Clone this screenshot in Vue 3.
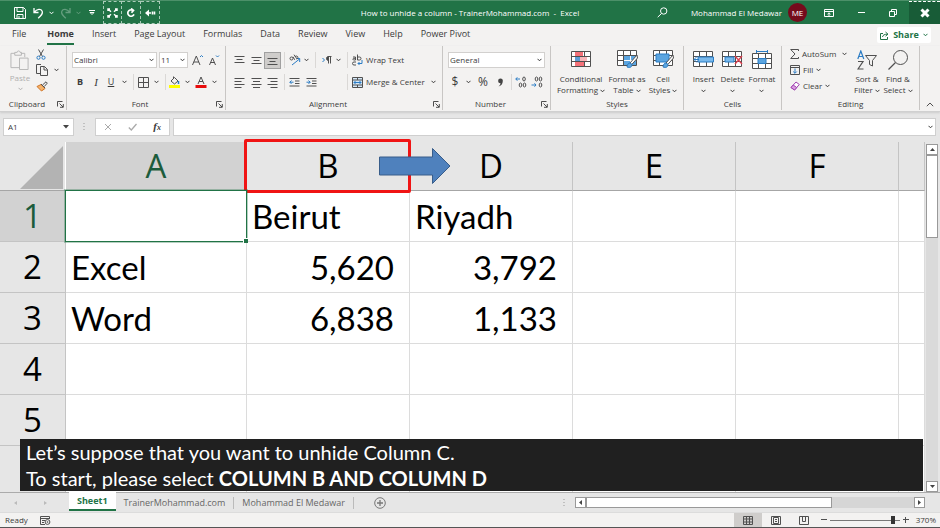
<script setup>
import { ref } from 'vue'

const tabs = ['File', 'Home', 'Insert', 'Page Layout', 'Formulas', 'Data', 'Review', 'View', 'Help', 'Power Pivot']
const activeTab = ref('Home')
const columns = ['A', 'B', 'D', 'E', 'F', '']
const rows = [
  { n: '1', cells: ['', 'Beirut', 'Riyadh', '', '', ''] },
  { n: '2', cells: ['Excel', '5,620', '3,792', '', '', ''] },
  { n: '3', cells: ['Word', '6,838', '1,133', '', '', ''] },
  { n: '4', cells: ['', '', '', '', '', ''] },
  { n: '5', cells: ['', '', '', '', '', ''] },
  { n: '', cells: ['', '', '', '', '', ''] }
]
const isNumber = (v) => /^[\d,]+$/.test(v)
const zoom = ref(370)
const cellName = ref('A1')
const formula = ref('')
</script>

<template>
  <div class="app">
    <svg class="defs" aria-hidden="true">
      <symbol id="chev" viewBox="0 0 5 4"><path d="M.5 .8l2 2 2-2" fill="none" stroke="currentColor" /></symbol>
      <symbol id="launch" viewBox="0 0 7 7"><path d="M.5 5.5v-5h5M2.5 2.5l3.5 3.5M6.3 3v3.3H3" fill="none" stroke="currentColor" stroke-width=".9" /></symbol>
      <symbol id="table" viewBox="0 0 21 17"><path d="M.5 .5h19v15H.5zM.5 5.5h19M.5 10.5h19M6.5 .5v15M13.5 .5v15" fill="#fff" stroke="#505050" /></symbol>
    </svg>

    <header class="titlebar">
      <div class="qat">
        <button aria-label="Save"><svg width="12" height="12" viewBox="0 0 12 12"><path d="M.5 .5h9l2 2v9H.5zM3 .5v4h6v-4M3 11.5v-4h6v4M5 9v2" /></svg></button>
        <button aria-label="Undo"><svg width="11" height="12" viewBox="0 0 11 12"><path d="M1 1v4.5h4.5M1.3 5.2C4 1.5 8 1.6 9.2 4.2c1 2.5-1 4.3-4 7" stroke-width="1.3" /></svg></button>
        <button aria-label="Undo list"><svg class="chev"><use href="#chev" /></svg></button>
        <button class="dim" aria-label="Redo"><svg width="11" height="12" viewBox="0 0 11 12"><path d="M10 1v4.5H5.5M9.700 5.200C7 1.500 3 1.600 1.800 4.200c-1 2.500 1 4.300 4 7" stroke-width="1.300" /></svg></button>
        <button class="dim" aria-label="Redo list"><svg class="chev"><use href="#chev" /></svg></button>
        <button aria-label="Customize toolbar"><svg width="6" height="7" viewBox="0 0 6 7"><path d="M0 1.500h6M1 3.500l2 2 2-2z" /></svg></button>
        <button class="boxed" aria-label="Fit"><svg width="11" height="10" viewBox="0 0 11 10"><path d="M1 3V1h2M8 1h2v2M10 7v2H8M3 9H1V7M1.500 1.500l2.500 2.200M9.500 1.500L7 3.700M1.500 8.500L4 6.300M9.500 8.500L7 6.300" stroke-width="1.500" /></svg></button>
        <button class="boxed" aria-label="Refresh"><svg width="10" height="10" viewBox="0 0 10 10"><path d="M8 6.300A3.200 3.200 0 1 1 6.500 2.200M5 .5l2.500 1.900L5.500 4.800" stroke-width="1.700" /></svg></button>
        <button class="boxed" aria-label="Back"><svg width="11" height="8" viewBox="0 0 11 8"><path d="M0 4l4-3.500v7z" class="solid" /><path d="M3 4h3M7.500 2.500v3M9.500 2.500v3" stroke-width="1.600" /></svg></button>
      </div>
      <div class="title">How to unhide a column - TrainerMohammad.com&nbsp; -&nbsp; Excel</div>
      <div class="account">
        <button class="search" aria-label="Search"><svg width="11" height="11" viewBox="0 0 11 11"><circle cx="6.700" cy="4" r="3.200" /><path d="M4.500 6.500L.7 10.200" /></svg></button>
        <span>Mohammad El Medawar</span>
        <span class="avatar">ME</span>
        <button class="win" aria-label="Ribbon options"><svg width="10" height="8" viewBox="0 0 10 8"><path d="M.5 .5h9v7h-9zM.5 2.500h9M5 7V4M3.500 5.200L5 3.800l1.500 1.400" /></svg></button>
        <button class="win" aria-label="Minimize"><svg width="7" height="8" viewBox="0 0 7 8"><path d="M0 3.500h7" /></svg></button>
        <button class="win" aria-label="Restore"><svg width="8" height="8" viewBox="0 0 8 8"><path d="M.5 2.500h5v5h-5zM2.500 2V.5h5v5H6" /></svg></button>
        <button class="close" aria-label="Close"><svg width="10" height="10" viewBox="0 0 10 10"><path d="M1.500 1.500l7 7M8.500 1.500l-7 7" stroke-width="3" /></svg></button>
      </div>
    </header>

    <nav class="tabs">
      <button v-for="t in tabs" :key="t" :class="{ active: t === activeTab }" @click="activeTab = t">{{ t }}</button>
      <button class="share"><svg width="9" height="9" viewBox="0 0 9 9"><path d="M3 2.500H.5v6h7V6M2.500 6c.3-2 2-2.800 5-2.800M5.500 1l2.500 2.200-2.500 2" /></svg><b>Share</b><svg class="chev"><use href="#chev" /></svg></button>
    </nav>

    <section class="ribbon">
      <div class="group clipboard">
        <div class="body">
          <button class="big paste"><svg width="20" height="21" viewBox="0 0 20 21"><path d="M4.500 3.500H.5v15h9M11 3.500h4v4M4.500 5.500v-3h2.500a1.500 1.500 0 0 1 3 0h1.500v3zM9.500 8.500h9v12h-9z" /></svg><span>Paste</span><svg class="chev"><use href="#chev" /></svg></button>
          <div class="stack">
            <button aria-label="Cut"><svg width="10" height="11" viewBox="0 0 10 11"><path d="M2.500 .5l4 7M7.500 .5l-4 7" stroke="#505050" /><circle cx="2.500" cy="8.700" r="1.600" stroke="#2b7cc4" /><circle cx="7.500" cy="8.700" r="1.600" stroke="#2b7cc4" /></svg></button>
            <button class="pair" aria-label="Copy"><svg width="12" height="12" viewBox="0 0 12 12"><path d="M4 9.500H.5v-9H5M4.500 2.500h4l3 3v6h-7zM8 2.500v3.500h3.500" /></svg><svg class="chev"><use href="#chev" /></svg></button>
            <button aria-label="Format painter"><svg width="12" height="11" viewBox="0 0 12 11"><path d="M1 5.500l4-2 4 4L5.500 10z" fill="#f5b36b" stroke="#d07526" /><path d="M5 3l4 4M6.500 4L10 .8l1.300 1.300L8.300 5.500" stroke="#505050" /></svg></button>
          </div>
        </div>
        <footer>Clipboard<svg class="launch"><use href="#launch" /></svg></footer>
      </div>

      <div class="group font">
        <div class="body lines">
          <div class="line">
            <span class="combo name"><select aria-label="Font"><option>Calibri</option></select><svg class="chev"><use href="#chev" /></svg></span>
            <span class="combo size"><select aria-label="Font size"><option>11</option></select><svg class="chev"><use href="#chev" /></svg></span>
            <button class="grow" aria-label="Grow font"><svg width="12" height="12" viewBox="0 0 12 12"><path d="M.5 11L4.300 2 8 11M1.800 8h5" /><path d="M8 3l1.500-1.500L11 3" stroke="#2b7cc4" /></svg></button>
            <button class="grow" aria-label="Shrink font"><svg width="11" height="12" viewBox="0 0 11 12"><path d="M.5 11l3-7 3 7M1.600 8.500h3.800" /><path d="M7 1.500L8.500 3 10 1.500" stroke="#2b7cc4" /></svg></button>
          </div>
          <div class="line font-row">
            <button class="glyph"><b>B</b></button><button class="serif"><i>I</i></button><button class="glyph"><u>U</u></button>
            <svg class="chev"><use href="#chev" /></svg><i class="sep" />
            <button aria-label="Borders"><svg width="11" height="11" viewBox="0 0 11 11"><path d="M.5 .5h10v10H.5zM5.500 .5v10M.5 5.500h10" /></svg></button>
            <svg class="chev"><use href="#chev" /></svg><i class="sep" />
            <button aria-label="Fill colour"><svg width="12" height="12" viewBox="0 0 12 12"><path d="M0 10.500h11" stroke="#ff0" stroke-width="3" /><path d="M2 5l3.500-3.500L9 5 5.500 8zM4.500 3V.5" /><path d="M9.500 5v3" stroke="#2b7cc4" stroke-width="1.500" /></svg></button>
            <svg class="chev"><use href="#chev" /></svg>
            <button aria-label="Font colour"><svg width="12" height="12" viewBox="0 0 12 12"><path d="M.5 10.500h11" stroke="#e80d0d" stroke-width="3" /><path d="M3 8l3-7 3 7M4 5.500h4" /></svg></button>
            <svg class="chev"><use href="#chev" /></svg>
          </div>
        </div>
        <footer>Font<svg class="launch"><use href="#launch" /></svg></footer>
      </div>

      <div class="group align">
        <div class="body lines">
          <div class="line align-row">
            <button aria-label="Top align"><svg width="11" height="11" viewBox="0 0 11 11"><path d="M.5 1.500h10M2.500 4.500h6M.5 7.500h10" /></svg></button>
            <button aria-label="Middle align"><svg width="11" height="11" viewBox="0 0 11 11"><path d="M.5 2.500h10M2.500 5.500h6M.5 8.500h10" /></svg></button>
            <button class="pressed" aria-label="Bottom align"><svg width="11" height="11" viewBox="0 0 11 11"><path d="M.5 3.500h10M2.500 6.500h6M.5 9.500h10" /></svg></button>
            <i class="sep" />
            <button aria-label="Orientation"><svg width="12" height="12" viewBox="0 0 12 12"><path d="M3 11l7.500-6M7.500 4.500h3.200V8" stroke="#2b7cc4" /><circle cx="2.500" cy="4.500" r="1.500" /><path d="M4 2.800l1.700 3M5 .7l2.800 4M6 3a1.500 1.500 0 1 1 1.500 2" /></svg></button>
            <svg class="chev"><use href="#chev" /></svg><i class="sep" />
            <button aria-label="Text direction"><svg width="10" height="8" viewBox="0 0 10 8"><path d="M.5 2l2 2-2 2" stroke="#2b7cc4" /><path d="M6.500 7.500v-7M8.500 7.500v-7M9.500 .5H6" /><path d="M6.500 .5a2 2 0 0 0 0 4z" fill="#444" /></svg></button>
            <svg class="chev"><use href="#chev" /></svg><i class="sep" />
            <button class="wide"><svg width="11" height="12" viewBox="0 0 11 12"><path d="M1 3h2.500v3H1.500a1 1 0 0 1 0-1.700h2M5.500 .5v5.500h2a1.500 1.500 0 0 0 0-3h-2M4 8H2a1.500 1.500 0 0 0 0 3h2" /><path d="M10 6v3.500H6M7.500 8L6 9.500 7.500 11" stroke="#2b7cc4" /></svg>Wrap Text</button>
          </div>
          <div class="line align-row second">
            <button aria-label="Align left"><svg width="11" height="11" viewBox="0 0 11 11"><path d="M.5 1.500h10M.5 4.500h7M.5 7.500h10M.5 10.500h7" /></svg></button>
            <button aria-label="Center"><svg width="11" height="11" viewBox="0 0 11 11"><path d="M.5 1.500h10M2 4.500h7M.5 7.500h10M2 10.500h7" /></svg></button>
            <button aria-label="Align right"><svg width="11" height="11" viewBox="0 0 11 11"><path d="M.5 1.500h10M3.500 4.500h7M.5 7.500h10M3.500 10.500h7" /></svg></button>
            <i class="sep" />
            <button aria-label="Decrease indent"><svg width="11" height="10" viewBox="0 0 11 10"><path d="M.5 1.500h10M6 4h4.500M6 6.500h4.500M.5 9h10" /><path d="M4.500 5.200H.8M2.500 3.500L.8 5.200l1.700 1.700" stroke="#2b7cc4" /></svg></button>
            <button aria-label="Increase indent"><svg width="11" height="10" viewBox="0 0 11 10"><path d="M.5 1.500h10M6 4h4.500M6 6.500h4.500M.5 9h10" /><path d="M.5 5.200h3.700M2.500 3.500l1.700 1.700-1.700 1.700" stroke="#2b7cc4" /></svg></button>
            <i />
            <i class="sep" />
            <button class="wide"><svg width="11" height="11" viewBox="0 0 11 11"><path d="M.5 .5h10v10H.5z" fill="#d5e8f8" /><path d="M.5 3h10M.5 8h10M5.500 .5V3M5.500 8v2.500" /><path d="M2 5.500h7M3.500 4L2 5.500 3.500 7M7.500 4L9 5.500 7.500 7" stroke="#2b7cc4" /></svg>Merge &amp; Center<svg class="chev far"><use href="#chev" /></svg></button>
          </div>
        </div>
        <footer>Alignment<svg class="launch"><use href="#launch" /></svg></footer>
      </div>

      <div class="group number">
        <div class="body lines">
          <div class="line"><span class="combo full"><select aria-label="Number format"><option>General</option></select><svg class="chev"><use href="#chev" /></svg></span></div>
          <div class="line number-row">
            <button class="sym">$</button><svg class="chev"><use href="#chev" /></svg><button class="sym">%</button>
            <button aria-label="Comma style"><svg width="7" height="9" viewBox="0 0 7 9"><path d="M3.500 .5a2.300 2.300 0 0 1 2.300 2.500C5.800 6 4 8 1.500 8.500c1.200-1 2-2 2-3.200A2.400 2.400 0 0 1 3.500 .5z" class="ink" /></svg></button>
            <i class="sep" />
            <button aria-label="Increase decimal"><svg width="12" height="12" viewBox="0 0 12 12"><path d="M5 3H.8M2.300 1.300L.8 3l1.500 1.700" stroke="#2b7cc4" /><ellipse cx="9" cy="3" rx="1.300" ry="2" /><ellipse cx="5.500" cy="9" rx="1.300" ry="2" /><ellipse cx="9.500" cy="9" rx="1.300" ry="2" /></svg></button>
            <button aria-label="Decrease decimal"><svg width="12" height="12" viewBox="0 0 12 12"><path d="M.5 9h4.500M3.500 7.300L5 9l-1.500 1.700" stroke="#2b7cc4" /><ellipse cx="5.500" cy="3" rx="1.300" ry="2" /><ellipse cx="9.500" cy="3" rx="1.300" ry="2" /><ellipse cx="9.500" cy="9" rx="1.300" ry="2" /></svg></button>
          </div>
        </div>
        <footer>Number<svg class="launch"><use href="#launch" /></svg></footer>
      </div>

      <div class="group styles">
        <div class="body">
          <button class="big"><svg width="20" height="18" viewBox="0 0 20 18"><use href="#table" width="21" height="17" /><path d="M4 1h8v4H4zM4 11h9v4H4z" fill="#f4727a" stroke="none" /><path d="M4 6h5v4H4z" fill="#5b9bd5" stroke="none" /><path d="M9 6h7v4H9z" fill="#f9b5b9" stroke="none" /></svg><span>Conditional<br>Formatting <svg class="chev"><use href="#chev" /></svg></span></button>
          <button class="big"><svg width="21" height="20" viewBox="0 0 21 20"><use href="#table" width="21" height="17" /><path d="M7 6h12v9H7z" fill="#5ba5e0" stroke="none" /><path d="M7 10.500h12M13.500 6v9" stroke="#fff" /><path d="M20 5l-7 8 1.800 1.500L20.500 8z" fill="#fff" /><path d="M13 13c-2 0-2.500 1.500-3 4 2.500 1 5 .5 5-2.500z" fill="#5ba5e0" stroke="#2b7cc4" /></svg><span>Format as<br>Table <svg class="chev"><use href="#chev" /></svg></span></button>
          <button class="big"><svg width="21" height="20" viewBox="0 0 21 20"><use href="#table" width="21" height="17" /><path d="M3 4h13v8H3z" fill="#5ba5e0" stroke="#2b7cc4" /><path d="M20 5l-7 8 1.800 1.500L20.500 8z" fill="#fff" /><path d="M13 13c-2 0-2.500 1.500-3 4 2.500 1 5 .5 5-2.500z" fill="#5ba5e0" stroke="#2b7cc4" /></svg><span>Cell<br>Styles <svg class="chev"><use href="#chev" /></svg></span></button>
        </div>
        <footer>Styles</footer>
      </div>

      <div class="group cells">
        <div class="body">
          <button class="big"><svg width="21" height="18" viewBox="0 0 21 18"><use href="#table" width="21" height="17" /><path d="M5 6h15.500v5H5z" fill="#79b9ec" stroke="#2b7cc4" /><path d="M6 8.500H1M4 5.500L1 8.500l3 3" stroke="#2b7cc4" /></svg><span>Insert<br><svg class="chev"><use href="#chev" /></svg></span></button>
          <button class="big"><svg width="21" height="18" viewBox="0 0 21 18"><use href="#table" width="21" height="17" /><path d="M3 6h9v5H3z" fill="#79b9ec" stroke="#2b7cc4" /><path d="M13 5l7 8M20 5l-7 8" stroke="#e04050" stroke-width="1.300" /></svg><span>Delete<br><svg class="chev"><use href="#chev" /></svg></span></button>
          <button class="big"><svg width="20" height="20" viewBox="0 0 20 20"><path d="M4.500 1.500h11M4.500 0v3M15.500 0v3" stroke="#2b7cc4" /><use href="#table" y="3" width="21" height="17" /><path d="M6 8.500h8v5H6z" fill="#5ba5e0" stroke="#2b7cc4" /></svg><span>Format<br><svg class="chev"><use href="#chev" /></svg></span></button>
        </div>
        <footer>Cells</footer>
      </div>

      <div class="group editing">
        <div class="body">
          <div class="stack">
            <button class="wide"><svg width="9" height="10" viewBox="0 0 9 10"><path d="M8.500 2V.5H.7L5 5 .7 9.500h7.800V8" /></svg>AutoSum<svg class="chev far"><use href="#chev" /></svg></button>
            <button class="wide"><svg width="10" height="10" viewBox="0 0 10 10"><path d="M.5 .5h9v9h-9zM.5 2.500h9" /><path d="M5 3.500v4.700M3.200 6.500L5 8.300l1.800-1.800" stroke="#2b7cc4" /></svg>Fill<svg class="chev"><use href="#chev" /></svg></button>
            <button class="wide"><svg width="10" height="10" viewBox="0 0 10 10"><path d="M6 1l3.300 2.500L4.500 9 1 6.500z" fill="#fff" stroke="#a03fb0" /><path d="M3.200 4L6.800 6.600 4.500 9 1 6.500z" fill="#d9a0e0" stroke="#a03fb0" /></svg>Clear<svg class="chev"><use href="#chev" /></svg></button>
          </div>
          <button class="big"><svg width="20" height="20" viewBox="0 0 20 20"><path d="M.8 9L3.800 1l3 8M1.800 6.500h4" stroke="#2b7cc4" stroke-width="1.200" /><path d="M1 11.500h5L1 19h5.500" stroke-width="1.200" /><path d="M8.500 5.500h11l-4 5v5.500l-3-1.500v-4z" /></svg><span>Sort &amp;<br>Filter <svg class="chev"><use href="#chev" /></svg></span></button>
          <button class="big"><svg width="21" height="20" viewBox="0 0 21 20"><circle cx="12.500" cy="7.500" r="7" /><path d="M7.500 12.500l-7 7" stroke-width="1.300" /></svg><span>Find &amp;<br>Select <svg class="chev"><use href="#chev" /></svg></span></button>
        </div>
        <footer>Editing</footer>
      </div>
      <button class="collapse" aria-label="Collapse ribbon"><svg width="8" height="5" viewBox="0 0 8 5"><path d="M.8 4.200L4 1l3.200 3.200" /></svg></button>
    </section>

    <section class="formula-bar">
      <label class="namebox"><input v-model="cellName" aria-label="Name box"><svg width="6" height="4" viewBox="0 0 6 4"><path d="M0 0h6L3 3.500z" class="ink" /></svg></label>
      <svg class="dots" width="2" height="10" viewBox="0 0 2 10"><path d="M1 1v9" stroke="#999" stroke-dasharray="1 2" /></svg>
      <div class="fx">
        <button aria-label="Cancel"><svg width="8" height="8" viewBox="0 0 8 8"><path d="M1 1l6 6M7 1L1 7" stroke="#aaa" /></svg></button>
        <button aria-label="Enter"><svg width="9" height="8" viewBox="0 0 9 8"><path d="M.8 4.500l2.500 2.500L8.500 1" stroke="#aaa" stroke-width="1.300" /></svg></button>
        <button aria-label="Insert function" class="serif"><i><b>f<small>x</small></b></i></button>
      </div>
      <label class="formula"><input v-model="formula" aria-label="Formula"><svg class="chev"><use href="#chev" /></svg></label>
    </section>

    <main class="workspace">
      <div class="sheet">
        <table>
          <colgroup><col class="c-head"><col class="c-a"><col v-for="i in 4" :key="i" class="c-n"><col></colgroup>
          <thead>
            <tr>
              <td class="corner"><svg width="43" height="43" viewBox="0 0 43 43"><path d="M43 0v43H0z" /></svg></td>
              <th v-for="c in columns" :key="c" :class="{ on: c === 'A', target: c === 'B' }">
                {{ c }}
                <template v-if="c === 'B'">
                  <span class="frame" />
                  <svg class="arrow" width="74" height="38" viewBox="0 0 74 38"><path d="M1.500 10h53V1.500L72 19 54.500 36.500V28h-53z" /></svg>
                </template>
              </th>
            </tr>
          </thead>
          <tbody>
            <tr v-for="(r, ri) in rows" :key="ri">
              <th :class="{ on: ri === 0 }">{{ r.n }}</th>
              <td v-for="(v, ci) in r.cells" :key="ci" :class="{ num: isNumber(v), selected: ri === 0 && ci === 0 }">{{ v }}</td>
            </tr>
          </tbody>
        </table>
      </div>
      <div class="vscroll">
        <button aria-label="Scroll up"><svg width="5" height="3" viewBox="0 0 5 3"><path d="M0 3L2.500 0 5 3z" class="ink" /></svg></button>
        <div class="thumb" />
        <div class="track" />
        <button aria-label="Scroll down"><svg width="5" height="3" viewBox="0 0 5 3"><path d="M0 0l2.500 3L5 0z" class="ink" /></svg></button>
      </div>
      <p class="caption">Let’s suppose that you want to unhide Column C.<br>To start, please select <b>COLUMN B AND COLUMN D</b></p>
    </main>

    <section class="sheetbar">
      <div class="nav">
        <button aria-label="Previous sheet"><svg width="3" height="4" viewBox="0 0 3 4"><path d="M3 0v4L0 2z" fill="#bbb" stroke="none" /></svg></button>
        <button aria-label="Next sheet"><svg width="3" height="4" viewBox="0 0 3 4"><path d="M0 0v4l3-2z" fill="#bbb" stroke="none" /></svg></button>
      </div>
      <button class="sheettab current">Sheet1</button>
      <button class="sheettab">TrainerMohammad.com</button>
      <button class="sheettab">Mohammad El Medawar</button>
      <button class="add" aria-label="New sheet"><svg width="12" height="12" viewBox="0 0 12 12"><circle cx="6" cy="6" r="5.300" stroke="#777" /><path d="M6 3v6M3 6h6" stroke="#777" stroke-width="1.300" /></svg></button>
      <svg class="dots" width="2" height="10" viewBox="0 0 2 10"><path d="M1 1v9" stroke="#999" stroke-dasharray="1 2" /></svg>
      <div class="hscroll">
        <button aria-label="Scroll left"><svg width="3" height="5" viewBox="0 0 3 5"><path d="M3 0v5L0 2.500z" class="ink" /></svg></button>
        <div class="thumb" />
        <div class="track" />
        <button aria-label="Scroll right"><svg width="3" height="5" viewBox="0 0 3 5"><path d="M0 0v5l3-2.500z" class="ink" /></svg></button>
      </div>
    </section>

    <footer class="status">
      <span>Ready</span>
      <button class="macro" aria-label="Record macro"><svg width="11" height="9" viewBox="0 0 11 9"><path d="M5 8.500H.5v-8h9V3M.5 2.500h9M2 4.500h3M2 6.500h2" /><circle cx="7.500" cy="6" r="2.400" /><circle cx="7.500" cy="6" r=".8" class="ink" /></svg></button>
      <button class="view on" aria-label="Normal"><svg width="10" height="9" viewBox="0 0 10 9"><path d="M.5 .5h9v8h-9zM.5 3h9M.5 6h9M3.500 .5v8M6.500 .5v8" /></svg></button>
      <button class="view" aria-label="Page layout"><svg width="10" height="9" viewBox="0 0 10 9"><path d="M.5 .5h9v8h-9zM2.500 1.500h5v6h-5zM4 3.500h2M4 5.500h2" /></svg></button>
      <button class="view" aria-label="Page break"><svg width="10" height="9" viewBox="0 0 10 9"><path d="M.5 .5h9v8h-9zM3.500 .5v5h3v-5" /></svg></button>
      <button class="step" aria-label="Zoom out"><svg width="6" height="6" viewBox="0 0 6 6"><path d="M0 2.500h6" /></svg></button>
      <input v-model="zoom" type="range" min="10" max="400" aria-label="Zoom">
      <button class="step" aria-label="Zoom in"><svg width="6" height="6" viewBox="0 0 6 6"><path d="M0 2.500h6M2.500 0v6" /></svg></button>
      <span class="pct">{{ zoom }}%</span>
    </footer>
  </div>
</template>

<style>
body { margin: 0; }
</style>

<style scoped>
.app { height: 100vh; min-height: 420px; display: flex; flex-direction: column; box-sizing: border-box; border-bottom: 1px solid #555; background: #e6e6e6; color: #3b3b3b; font: 8px/12px "Open Sans", "Noto Sans", sans-serif; overflow: hidden; }
.app * { box-sizing: border-box; }
.defs { position: absolute; width: 0; height: 0; }
button, select, input { font: inherit; color: inherit; background: none; border: 0; padding: 0; margin: 0; white-space: nowrap; }
button { display: flex; align-items: center; justify-content: center; }
svg { flex: none; fill: none; stroke: #505050; }
svg .ink { fill: #444; stroke: none; }
.chev { width: 5px; height: 4px; stroke: none; }
.launch { width: 7px; height: 7px; stroke: none; }

.titlebar { display: grid; grid-template-columns: 1fr auto 1fr; flex: none; height: 24px; background: #217346; border-top: 1px solid #4c9069; color: #fff; align-items: stretch; }
.titlebar svg { stroke: #fff; }
.titlebar .chev { stroke: none; }
.titlebar .solid { fill: #fff; stroke: none; }
.title { align-self: center; white-space: nowrap; }
.qat { display: grid; grid-template-columns: 18px 18px 8px 20px 6px 22px 19px 19px 19px; padding-left: 11px; }
.qat .dim { opacity: .3; }
.boxed { border: 1px dashed #a9cbb8; border-left-width: 0; }
.boxed:nth-child(7) { border-left-width: 1px; }
.account { display: flex; align-items: center; justify-content: flex-end; }
.account button { height: 100%; }
.search { width: 12px; margin-right: 22px; }
.avatar { width: 19px; height: 19px; margin: 0 6px; border-radius: 50%; background: #750b1c; text-align: center; line-height: 19px; }
.win { width: 32px; }
.close { width: 31px; background: #185c37; border-top: 1px dashed #fff; }

.tabs { display: flex; flex: none; align-items: center; gap: 18px; height: 22px; padding: 0 9px 0 12px; background: #f3f2f1; font-size: 9px; }
.tabs button { height: 19px; border-bottom: 2px solid transparent; }
.tabs .active { font-weight: 700; border-color: #217346; margin-left: 3px; }
.tabs .share { margin-left: auto; width: 54px; height: 16px; gap: 4px; background: #fff; color: #217346; border: 0; border-radius: 2px; }
.share svg { stroke: #217346; }
.share .chev { stroke: none; }

.ribbon { display: flex; flex: none; height: 66px; padding-bottom: 1px; background: #f3f2f1; border-bottom: 1px solid #d0d0d0; box-shadow: 0 1px 2px #ccc; }
.group { display: flex; flex-direction: column; border-right: 1px solid #c8c6c4; flex: none; }
.body { flex: 1; display: flex; min-height: 0; }
.group footer { position: relative; height: 12px; text-align: center; white-space: nowrap; }
.group .launch { position: absolute; right: 2px; top: 3px; }
.clipboard { width: 67px; }
.clipboard footer { padding-right: 12px; }
.font { width: 159px; }
.font footer { padding-right: 12px; }
.align { width: 217px; }
.align footer { padding-right: 12px; }
.number { width: 108px; }
.number footer { padding-right: 12px; }
.styles { width: 133px; }
.cells { width: 98px; }
.editing { width: 138px; }

.big { flex-direction: column; justify-content: flex-start; gap: 3px; padding-top: 4px; line-height: 11px; text-align: center; }
.big > svg:first-child { height: 20px; }
.big span { display: block; }
.big span .chev { vertical-align: middle; }
.paste { width: 34px; padding-left: 6px; color: #b0b0b0; gap: 2px; }
.paste > svg { stroke: #b5b5b5; }
.paste > .chev { stroke: none; margin-top: 2px; }
.clipboard .stack { display: grid; grid-template-rows: 16px 16px 16px; justify-items: start; padding-left: 2px; }
.pair { gap: 6px; }
.styles .body { display: grid; grid-template-columns: 52px 40px 32px; padding-left: 4px; }
.cells .body { display: grid; grid-template-columns: 29px 29px 30px; padding-left: 5px; }
.editing .body { display: grid; grid-template-columns: 62px 30px 32px; padding-left: 8px; }
.editing .stack { display: grid; grid-template-rows: 16px 16px 16px; justify-items: start; }
.wide { gap: 3px; }
.wide .far { margin-left: 3px; }

.lines { flex-direction: column; }
.line { display: flex; align-items: center; gap: 2px; height: 18px; margin: 5px 0 0 5px; }
.line + .line { height: 16px; margin-top: 5px; }
.line > .chev { justify-self: center; }
.font-row { display: grid; grid-template-columns: 16px 16px 14px 12px 6px 14px 12px 6px 14px 10px 18px 8px; gap: 0; }
.align-row { display: grid; grid-template-columns: 17px 16px 17px 6px 15px 9px 9px 14px 9px 9px auto; gap: 0; justify-content: start; }
.align-row.second { grid-template-columns: 17px 16px 17px 6px 15px 18px 23px 9px auto; }
.number-row { display: grid; grid-template-columns: 14px 12px 18px 16px 6px 14px 18px; gap: 0; }
.sep { width: 1px; height: 16px; background: #dad8d6; justify-self: center; }
.combo { display: grid; align-items: center; height: 16px; background: #fff; border: 1px solid #d2d0ce; }
.combo > * { grid-area: 1 / 1; }
.combo select { appearance: none; width: 100%; padding-left: 1px; line-height: 14px; outline: 0; }
.combo .chev { justify-self: end; margin-right: 2px; pointer-events: none; }
.name { width: 85px; }
.size { width: 29px; }
.full { width: 97px; }
.grow { width: 15px; }
.glyph { font-size: 9px; }
.serif { font-family: "Liberation Serif", serif; font-size: 11px; }
.serif small { font-size: 8px; }
.sym { font-size: 12px; }
.pressed { width: 17px; height: 17px; background: #cfcdcb; border: 1px solid #a0a0a0; }
.collapse { margin-left: auto; padding: 0 6px 3px 0; align-self: flex-end; }

.formula-bar { display: flex; flex: none; align-items: center; height: 30px; padding: 0 4px 0 3px; }
.namebox, .formula, .fx { display: flex; align-items: center; height: 18px; background: #fff; border: 1px solid #cfcfcf; }
.namebox { width: 71px; padding: 0 4px; }
.namebox input { flex: 1; min-width: 0; }
.dots { margin: 0 10px 0 9px; }
.fx { width: 75px; justify-content: space-around; }
.formula { flex: 1; margin-left: 3px; padding: 0 2px; }
.formula input { flex: 1; outline: 0; }

.workspace { position: relative; flex: 1; display: flex; min-height: 0; margin-top: -6px; }
.sheet { flex: 1; min-width: 0; overflow: hidden; padding-top: 6px; }
table { width: 100%; table-layout: fixed; border-collapse: separate; border-spacing: 0; color: #000; }
.c-head { width: 66px; }
.c-a { width: 181px; }
.c-n { width: 163px; }
th, td { height: 51px; padding: 0 5px; border: 0 solid #dcdcdc; border-width: 0 1px 1px 0; background: #fff; text-align: left; white-space: nowrap; font: 33px/50px Lato, "Open Sans", sans-serif; }
th { background: #e6e6e6; text-align: center; font: 33px/48px "Open Sans", sans-serif; border-color: #c4c4c4; }
thead th, thead td { height: 49px; border-bottom-color: #a6a6a6; }
th.on { background: #d2d2d2; color: #1c5c3c; }
.target { position: relative; }
.corner { background: #e6e6e6; padding: 2px 2px 0 0; line-height: 0; text-align: right; border-right-color: #fff; }
.corner path { fill: #b3b3b3; stroke: none; }
.num { text-align: right; padding-right: 15px; }
.selected { position: relative; }
.selected::before { content: ""; position: absolute; inset: -1px; border: 1px solid #217346; box-shadow: 0 0 0 1px #21734655; }
.selected::after { content: ""; position: absolute; right: -2px; bottom: -2px; width: 4px; height: 4px; background: #217346; border: 1px solid #fff; border-width: 1px 0 0 1px; box-sizing: content-box; }
.frame { position: absolute; inset: -3px -2px -3px -3px; border: 3px solid #f01414; border-radius: 2px; }
.arrow { position: absolute; left: 131px; top: 5px; z-index: 2; }
.arrow path { fill: #4f81bd; stroke: #385d8a; }

.vscroll { display: flex; flex-direction: column; width: 12px; margin: 8px 2px 0 1px; }
.vscroll button { height: 11px; background: #fff; border: 1px solid #999; }
.vscroll .thumb { flex: 82; background: #fff; border: 1px solid #999; }
.vscroll .track { flex: 247; background: #dadada; }
.caption { position: absolute; left: 20px; right: 17px; bottom: 1px; margin: 0; padding: 0 6px; background: #202020; color: #fff; font: 20px/26px Lato, sans-serif; }

.sheetbar { display: flex; flex: none; align-items: center; height: 20px; padding-right: 15px; border-top: 1px solid #ababab; color: #666; font-size: 9px; }
.nav { display: flex; justify-content: space-around; width: 60px; margin-right: 9px; }
.sheettab { height: 12px; padding: 0 8px; border-right: 1px solid #bbb; }
.current { height: 100%; margin-bottom: 2px; background: #fff; color: #217346; font-weight: 700; border: 0; border-bottom: 2px solid #217346; }
.add { margin-left: 20px; }
.sheetbar .dots { margin: 0 10px 0 auto; }
.hscroll { display: flex; width: 350px; height: 11px; }
.hscroll button { width: 11px; background: #fff; border: 1px solid #999; }
.hscroll .thumb { flex: 247; background: #fff; border: 1px solid #999; }
.hscroll .track { flex: 83; background: #d6d6d6; }

.status { display: flex; flex: none; align-items: center; height: 15px; padding: 0 4px 0 5px; background: #f3f2f1; border-top: 1px solid #dcdcdc; }
.macro { margin: 0 auto 0 12px; }
.view { width: 28px; height: 14px; }
.view.on { background: #cfcdcb; }
.step { width: 12px; }
input[type="range"] { appearance: none; width: 70px; height: 10px; background: linear-gradient(#777, #777) center / 100% 1px no-repeat; }
input[type="range"]::-webkit-slider-thumb { appearance: none; width: 4px; height: 8px; background: #333; }
.pct { width: 24px; text-align: right; }
</style>
